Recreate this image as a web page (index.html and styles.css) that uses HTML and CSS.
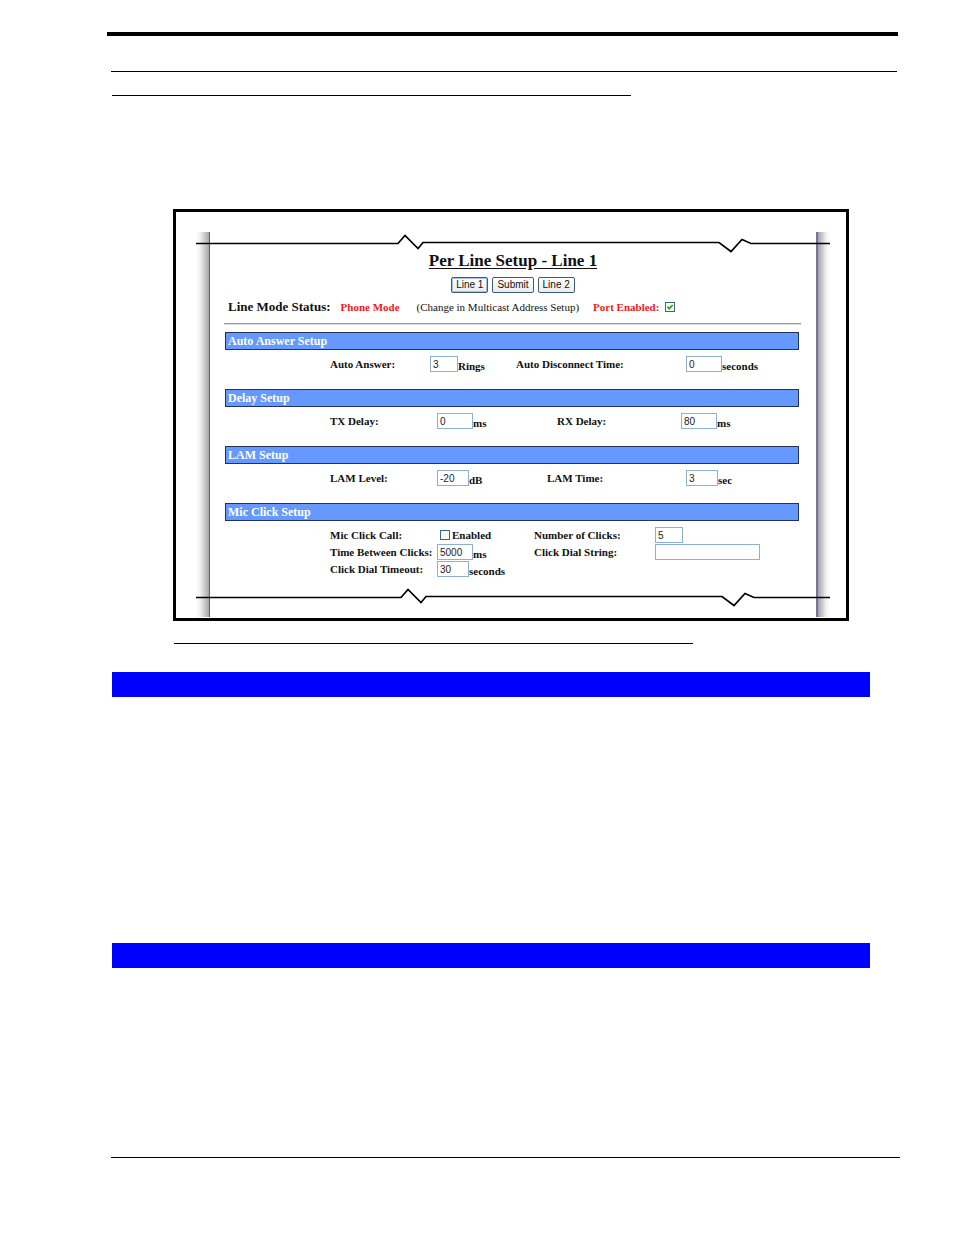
FILE: index.html
```
<!DOCTYPE html>
<html lang="en">
    <head>
        <meta charset="UTF-8">
        <meta name="viewport" content="width=device-width, initial-scale=1.0">
        <title>Per Line Setup</title>
        <link rel="stylesheet" href="styles.css">
    </head>
    <body>
        <div class="topBar"></div>
        <div class="headerLine"></div>
        <div class="captionLine captionTop"></div>

        <div class="frame">
            <form class="window">
                <svg class="break" viewBox="0 0 634 20" preserveAspectRatio="none">
                    <path d="M0 11.5H202L209 3.5L222 16.5L227 10.5H523L535 19.5L546 7.5L555 11.5H634"/>
                </svg>
                <h1>Per Line Setup - Line 1</h1>
                <div class="buttons">
                    <button type="button" class="current">Line 1</button>
                    <button type="button">Submit</button>
                    <button type="button">Line 2</button>
                </div>
                <div class="status">
                    <span class="statusTitle">Line Mode Status:</span>
                    <span class="red">Phone Mode</span>
                    <span class="note">(Change in Multicast Address Setup)</span>
                    <label class="red" for="port">Port Enabled:</label>
                    <input type="checkbox" id="port" checked>
                </div>
                <hr>

                <section>
                    <h2>Auto Answer Setup</h2>
                    <div class="row answer">
                        <label for="answer">Auto Answer:</label>
                        <div class="field"><input type="text" class="small" id="answer" value="3">Rings</div>
                        <label for="disconnect">Auto Disconnect Time:</label>
                        <div class="field"><input type="text" class="large" id="disconnect" value="0">seconds</div>
                    </div>
                </section>

                <section>
                    <h2>Delay Setup</h2>
                    <div class="row delay">
                        <label for="tx">TX Delay:</label>
                        <div class="field"><input type="text" class="large" id="tx" value="0">ms</div>
                        <label for="rx">RX Delay:</label>
                        <div class="field"><input type="text" class="large" id="rx" value="80">ms</div>
                    </div>
                </section>

                <section>
                    <h2>LAM Setup</h2>
                    <div class="row lam">
                        <label for="level">LAM Level:</label>
                        <div class="field"><input type="text" class="medium" id="level" value="-20">dB</div>
                        <label for="time">LAM Time:</label>
                        <div class="field"><input type="text" class="medium" id="time" value="3">sec</div>
                    </div>
                </section>

                <section>
                    <h2>Mic Click Setup</h2>
                    <div class="row mic">
                        <span>Mic Click Call:</span>
                        <div class="field check"><input type="checkbox" id="call"><label for="call">Enabled</label></div>
                        <label for="clicks">Number of Clicks:</label>
                        <div class="field"><input type="text" class="small" id="clicks" value="5"></div>

                        <label for="between">Time Between Clicks:</label>
                        <div class="field"><input type="text" class="large" id="between" value="5000">ms</div>
                        <label for="string">Click Dial String:</label>
                        <div class="field"><input type="text" class="wide" id="string"></div>

                        <label for="timeout">Click Dial Timeout:</label>
                        <div class="field"><input type="text" class="medium" id="timeout" value="30">seconds</div>
                    </div>
                </section>

                <svg class="break breakBottom" viewBox="0 0 634 20" preserveAspectRatio="none">
                    <path d="M0 11.5H205L212 3.5L225 16.5L230 10.5H526L538 19.5L549 7.5L558 11.5H634"/>
                </svg>
            </form>
        </div>

        <div class="captionLine captionFigure"></div>
        <div class="blueBar"></div>
        <div class="blueBar blueBarLast"></div>
        <div class="footerLine"></div>
    </body>
</html>
```
FILE: styles.css
```
* {
    box-sizing: border-box;
}

body {
    margin: 0;
    padding: 32px 54px 77px 107px;
    background: #fff;
    color: #111;
    font-family: "Liberation Serif", "Times New Roman", serif;
    font-size: 11px;
}

/* page rules */
.topBar {
    height: 4px;
    margin-right: 2px;
    background: #000;
}

.headerLine, .footerLine, .captionLine {
    height: 1px;
    background: #000;
}

.headerLine {
    margin: 35px 3px 0 4px;
}

.captionLine {
    max-width: 519px;
}

.captionTop {
    margin: 23px 0 0 5px;
}

.captionFigure {
    margin: 22px 0 0 67px;
}

.blueBar {
    height: 25px;
    margin: 28px 30px 0 5px;
    background: #00f;
}

.blueBarLast {
    margin-top: 246px;
}

.footerLine {
    margin: 189px 0 0 4px;
}

/* figure */
.frame {
    margin: 113px 51px 0 66px;
    padding: 20px 16px 1px 20px;
    border: 3px solid #000;
}

.window {
    padding-bottom: 11px;
    background:
        linear-gradient(to right, #fff, #f0f0f0 4px, #a8a8a8 13px, #5c5c80 13px) left / 14px 100% no-repeat,
        linear-gradient(to left, #fff, #f0f0f0 4px, #a0a0a8 12px, #74749a 12px) right / 14px 100% no-repeat;
}

.break {
    display: block;
    width: 100%;
    height: 20px;
    overflow: visible;
    fill: none;
    stroke: #000;
    stroke-width: 1.7;
}

.breakBottom {
    margin-top: 9px;
}

h1 {
    margin: 0;
    font-size: 17px;
    line-height: 18px;
    text-align: center;
    text-decoration: underline;
    text-underline-offset: 2px;
}

.buttons {
    display: flex;
    justify-content: center;
    gap: 4px;
    margin-top: 7px;
}

button {
    height: 16px;
    padding: 0 4px;
    border: 1px solid #3c5a80;
    border-radius: 2px;
    background: linear-gradient(#fff, #ecebe6);
    color: #111;
    font-family: "Liberation Sans", Arial, sans-serif;
    font-size: 10px;
    line-height: 12px;
}

.current {
    box-shadow: inset 0 0 0 1px #a5c0f0;
}

.status {
    display: flex;
    align-items: center;
    height: 14px;
    margin: 7px 28px 0 32px;
    white-space: nowrap;
}

.statusTitle {
    margin-right: 10px;
    font-size: 13px;
    font-weight: bold;
}

.red {
    color: #f01820;
    font-weight: bold;
}

.note {
    margin: 0 14px 0 17px;
}

input[type=checkbox] {
    appearance: none;
    width: 10px;
    height: 10px;
    margin: 0;
    border: 1px solid #3c6488;
    background: #f6f6f2;
}

input[type=checkbox]:checked {
    background: #fff url("data:image/svg+xml,%3Csvg xmlns='http://www.w3.org/2000/svg' viewBox='0 0 8 8'%3E%3Cpath d='M1.5 3.5L3.2 5.7L6.7 2' fill='none' stroke='%2321a121' stroke-width='1.7'/%3E%3C/svg%3E");
}

.status input {
    margin-left: 6px;
}

hr {
    height: 2px;
    margin: 9px 29px 7px 28px;
    border: 0;
    border-top: 1px solid #999;
    border-bottom: 1px solid #ddd;
}

section {
    margin: 0 31px 0 29px;
}

section + section {
    margin-top: 17px;
}

h2 {
    height: 18px;
    margin: 0 0 6px;
    padding-left: 2px;
    border: 1px solid #223355;
    background: #6699ff;
    color: #fff;
    font-size: 12px;
    line-height: 17px;
}

.row {
    display: grid;
    row-gap: 1px;
    padding-left: 105px;
    font-weight: bold;
    line-height: 16px;
    white-space: nowrap;
}

.answer {
    grid-template-columns: 100fr 86fr 170fr 113fr;
}

.delay {
    grid-template-columns: 107fr 120fr 124fr 118fr;
}

.lam {
    grid-template-columns: 107fr 110fr 139fr 113fr;
}

.mic {
    grid-template-columns: 107fr 97fr 121fr 144fr;
}

.field {
    display: flex;
    align-items: flex-end;
    height: 16px;
    line-height: 12px;
}

.check {
    align-items: center;
    gap: 2px;
    padding-left: 3px;
}

input[type=text] {
    height: 16px;
    padding: 0 2px;
    border: 1px solid #8fb0d6;
    background: #fff;
    color: #222;
    font-family: "Liberation Sans", Arial, sans-serif;
    font-size: 10px;
}

.small {
    width: 28px;
}

.medium {
    width: 32px;
}

.large {
    width: 36px;
}

.wide {
    width: 105px;
}
```
